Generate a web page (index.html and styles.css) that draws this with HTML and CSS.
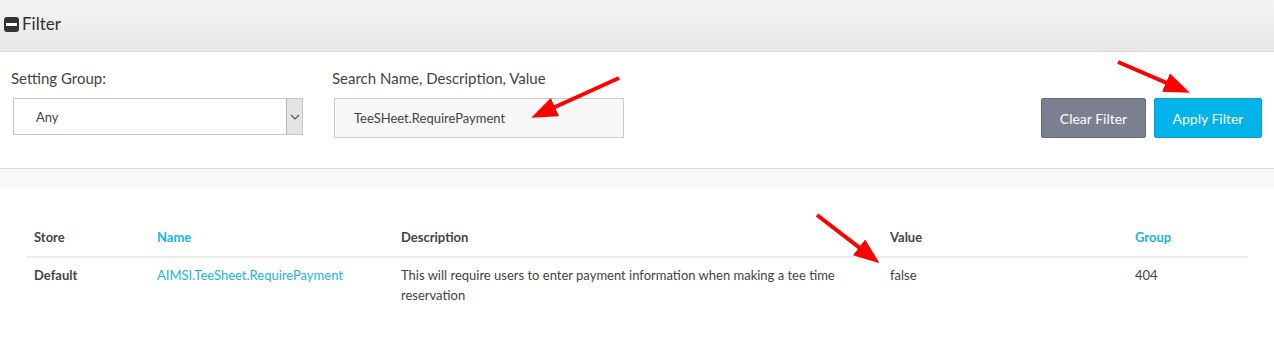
FILE: index.html
```html
<!DOCTYPE html>
<html>
<head>
<meta charset="utf-8">
<link rel="stylesheet" href="styles.css">
</head>
<body>
<div class="page">
  <div class="panel-head">
    <span class="collapse-icon"><span class="bar"></span></span>
    <span class="panel-title">Filter</span>
  </div>
  <div class="filter-row">
    <div class="field field-group">
      <div class="label">Setting Group:</div>
      <div class="select">
        <span class="select-value">Any</span>
        <span class="select-arrow">
          <svg width="10" height="6" viewBox="0 0 10 6"><path d="M1 1 L5 5 L9 1" fill="none" stroke="#555" stroke-width="1.2"/></svg>
        </span>
      </div>
    </div>
    <div class="field field-search">
      <div class="label">Search Name, Description, Value</div>
      <div class="input">TeeSHeet.RequirePayment</div>
    </div>
    <div class="buttons">
      <button class="btn btn-clear">Clear Filter</button>
      <button class="btn btn-apply">Apply Filter</button>
    </div>
  </div>
  <div class="band"></div>
  <table class="grid">
    <colgroup>
      <col class="c-store"><col class="c-name"><col class="c-desc"><col class="c-value"><col class="c-group">
    </colgroup>
    <thead>
      <tr>
        <th>Store</th>
        <th class="sort">Name</th>
        <th>Description</th>
        <th>Value</th>
        <th class="sort">Group</th>
      </tr>
    </thead>
    <tbody>
      <tr>
        <td class="bold">Default</td>
        <td class="link">AIMSI.TeeSheet.RequirePayment</td>
        <td>This will require users to enter payment information when making a tee time reservation</td>
        <td>false</td>
        <td>404</td>
      </tr>
    </tbody>
  </table>
  <svg class="arrows" width="1274" height="343" viewBox="0 0 1274 343">
    <defs>
      <marker id="head" markerUnits="userSpaceOnUse" markerWidth="26" markerHeight="20" refX="12" refY="10" orient="auto">
        <path d="M0,0 L26,10 L0,20 z" fill="#ff0000"/>
      </marker>
    </defs>
    <line x1="619" y1="78" x2="544" y2="112" stroke="#ff0000" stroke-width="4" marker-end="url(#head)"/>
    <line x1="1118" y1="62" x2="1177" y2="87.3" stroke="#ff0000" stroke-width="4" marker-end="url(#head)"/>
    <line x1="817" y1="215" x2="868.5" y2="254.7" stroke="#ff0000" stroke-width="4" marker-end="url(#head)"/>
  </svg>
</div>
</body>
</html>
```
FILE: styles.css
```css
html, body {
  margin: 0;
  padding: 0;
  background: #fff;
}
body {
  font-family: Lato, "Open Sans", sans-serif;
  color: #444;
}
.page {
  position: relative;
  width: 1274px;
  height: 343px;
  overflow: hidden;
}
.panel-head {
  height: 51px;
  border-bottom: 1px solid #dadada;
  background: linear-gradient(#f4f4f4, #e7e7e7);
  display: flex;
  align-items: center;
  padding-left: 4px;
  gap: 3px;
}
.collapse-icon {
  width: 15px;
  height: 15px;
  background: #333;
  border-radius: 3px;
  display: flex;
  align-items: center;
  justify-content: center;
  margin-top: -3px;
}
.collapse-icon .bar {
  width: 11px;
  height: 3px;
  background: #fff;
}
.panel-title {
  font-size: 17px;
  color: #333;
  margin-top: -4px;
}
.filter-row {
  display: flex;
  align-items: flex-start;
  padding: 16px 12px 30px 11px;
  border-bottom: 1px solid #dcdcdc;
}
.field {
  display: flex;
  flex-direction: column;
}
.label {
  font-size: 15px;
  line-height: 20px;
  color: #444;
  margin-bottom: 10px;
}
.field-group {
  width: 292px;
}
.select {
  margin-left: 2px;
  width: 290px;
  height: 37px;
  box-sizing: border-box;
  border: 1px solid #c8c8c8;
  display: flex;
  align-items: stretch;
  background: #fff;
}
.select-value {
  flex: 1;
  font-size: 13px;
  padding-left: 22px;
  display: flex;
  align-items: center;
  color: #444;
}
.select-arrow {
  width: 15px;
  background: #e3e3e3;
  border-left: 1px solid #b9b9b9;
  display: flex;
  align-items: center;
  justify-content: center;
}
.field-search {
  margin-left: 29px;
}
.input {
  margin-left: 2px;
  width: 290px;
  height: 40px;
  box-sizing: border-box;
  border: 1px solid #cdcdcd;
  background: #f7f7f7;
  font-size: 13px;
  padding-left: 19px;
  display: flex;
  align-items: center;
  color: #444;
}
.buttons {
  margin-left: auto;
  margin-top: 30px;
  display: flex;
  gap: 8px;
}
.btn {
  height: 40px;
  box-sizing: border-box;
  font-family: Lato, "Open Sans", sans-serif;
  font-size: 14px;
  color: #fff;
  border-radius: 2px;
  padding: 0;
  cursor: pointer;
}
.btn-clear {
  width: 105px;
  background: #7a8090;
  border: 1px solid #686d7a;
}
.btn-apply {
  width: 108px;
  background: #00b3e9;
  border: 1px solid #0a9fd0;
}
.band {
  height: 19px;
  background: #f7f8fa;
}
.grid {
  margin: 30px 26px 0 26px;
  width: 1222px;
  border-collapse: collapse;
  table-layout: fixed;
  font-size: 13px;
}
.c-store { width: 123px; }
.c-name { width: 244px; }
.c-desc { width: 489px; }
.c-value { width: 245px; }
.c-group { width: 121px; }
.grid th {
  text-align: left;
  font-weight: bold;
  color: #444;
  line-height: 20px;
  padding: 9px 8px;
  border-bottom: 2px solid #ececec;
}
.grid th.sort {
  color: #1ab3e8;
}
.grid td {
  vertical-align: top;
  line-height: 20px;
  padding: 7px 8px;
  color: #444;
}
.grid td.bold {
  font-weight: bold;
}
.grid td.link {
  color: #1ab3e8;
}
.arrows {
  position: absolute;
  left: 0;
  top: 0;
  pointer-events: none;
}
```
